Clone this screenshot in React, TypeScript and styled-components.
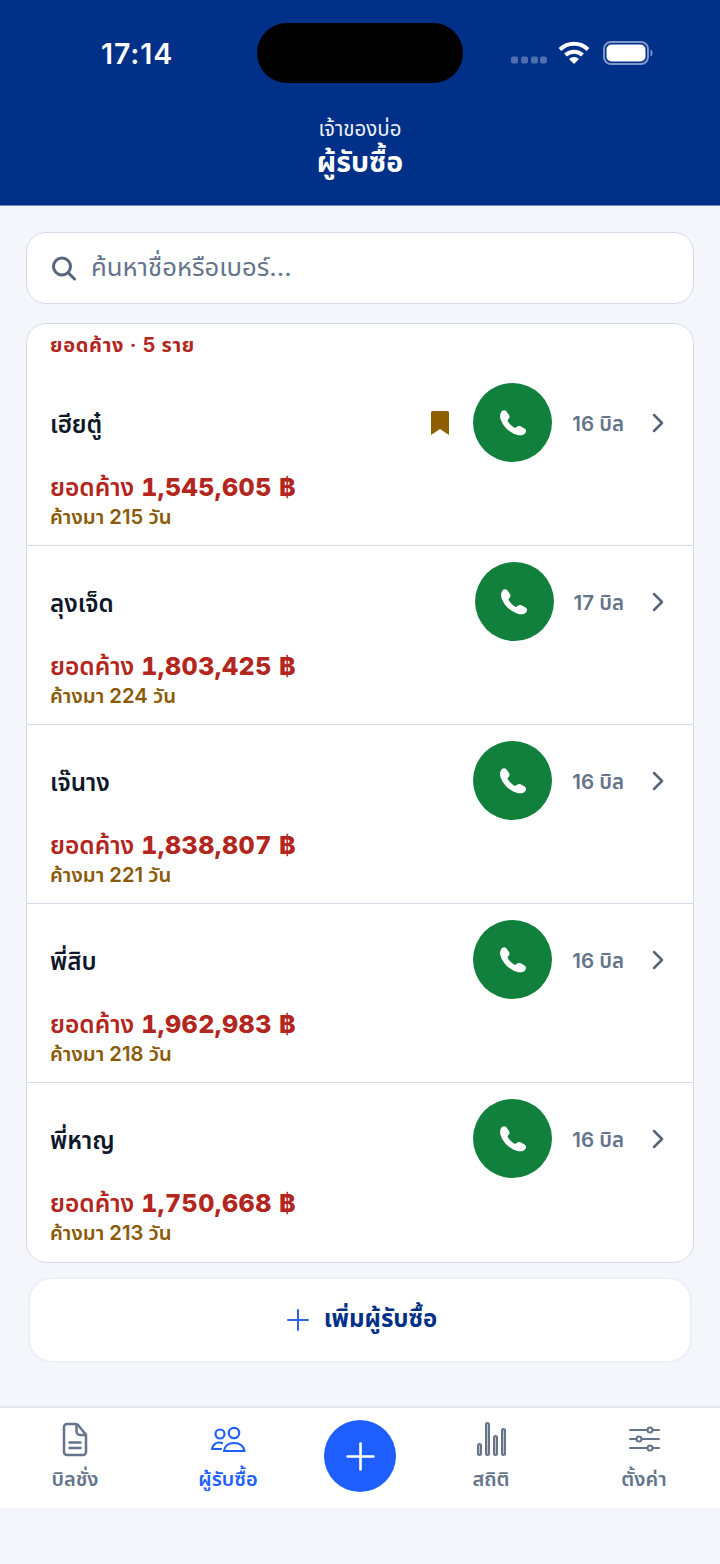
import React from "react";
import styled, { createGlobalStyle } from "styled-components";

const Global = createGlobalStyle`
  html, body { margin: 0; padding: 0; background: #f4f6fb; }
  body { font-family: Inter, "Noto Sans", "Noto Sans Thai", sans-serif; }
  * { box-sizing: border-box; }
`;

const Page = styled.div`
  width: 720px;
  height: 1564px;
  background: #f4f6fb;
  display: flex;
  flex-direction: column;
`;

const Header = styled.header`
  height: 206px;
  background: #003087;
  border-bottom: 1px solid #6f8cc6;
  color: #fff;
  display: flex;
  flex-direction: column;
`;

const StatusBar = styled.div`
  height: 60px;
  margin-top: 23px;
  display: flex;
  align-items: center;
`;

const Time = styled.div`
  width: 257px;
  padding-left: 101px;
  font-size: 28.5px;
  font-weight: 600;
  letter-spacing: 0.9px;
`;

const Island = styled.div`
  width: 206px;
  height: 60px;
  border-radius: 30px;
  background: #000;
`;

const StatusIcons = styled.div`
  margin-left: 48px;
  display: flex;
  align-items: center;
  gap: 11px;
  height: 60px;
  padding-bottom: 1px;
`;

const SignalDots = styled.svg`
  width: 36px;
  height: 8px;
  margin-top: 15px;
`;

const Battery = styled.svg`
  width: 50px;
  height: 24px;
  margin-left: 2px;
`;

const HeaderTitles = styled.div`
  margin-top: 33px;
  text-align: center;
`;

const Owner = styled.div`
  font-size: 20.5px;
  line-height: 26px;
  color: #eef2fb;
`;

const Title = styled.div`
  font-size: 28.5px;
  line-height: 36px;
  font-weight: 700;
  padding-top: 2px;
`;

const Content = styled.main`
  flex: 1;
  padding: 26px 26px 0;
  display: flex;
  flex-direction: column;
`;

const Search = styled.div`
  height: 72px;
  border-radius: 20px;
  background: #fff;
  border: 1px solid #d5dce9;
  display: flex;
  align-items: center;
  padding: 0 24px;
  gap: 15px;
  color: #64748b;
  font-size: 25.7px;
`;

const Card = styled.section`
  margin-top: 19px;
  height: 940px;
  border-radius: 20px;
  background: #fff;
  border: 1px solid #d5dce9;
  overflow: hidden;
`;

const CardLabel = styled.div`
  height: 43px;
  padding: 8px 23px 0;
  font-size: 20px;
  line-height: 26px;
  font-weight: 700;
  letter-spacing: 0.7px;
  color: #b3261e;
`;

const Row = styled.div`
  height: 179px;
  padding: 16px 28px 0 23px;
  border-bottom: 1px solid #d5dce9;
  &:last-child { border-bottom: 0; }
`;

const RowTop = styled.div`
  height: 80px;
  display: flex;
  align-items: center;
`;

const Name = styled.div`
  flex: 1;
  font-size: 24.2px;
  font-weight: 600;
  color: #0f172a;
  padding-top: 4px;
`;

const Flag = styled.svg`
  width: 20px;
  height: 26px;
  margin-right: 23px;
  margin-bottom: 1px;
`;

const Call = styled.div`
  width: 79px;
  height: 79px;
  margin-bottom: 1px;
  border-radius: 50%;
  background: #11803c;
  display: flex;
  align-items: center;
  justify-content: center;
`;

const Bills = styled.div`
  margin-left: 20px;
  padding-top: 3px;
  font-size: 20.5px;
  font-weight: 600;
  color: #64748b;
  white-space: nowrap;
`;

const Chevron = styled.svg`
  width: 14px;
  height: 22px;
  margin-left: 27px;
`;

const Amount = styled.div`
  margin-top: 8px;
  display: flex;
  align-items: baseline;
  gap: 7px;
  color: #b3261e;
  font-size: 24.5px;
  line-height: 32px;
  font-weight: 600;
`;

const Figure = styled.span`
  font-size: 25px;
  font-weight: 800;
  letter-spacing: 0.45px;
  font-variant-numeric: tabular-nums;
`;

const Overdue = styled.div`
  margin-top: 1px;
  font-size: 20.3px;
  line-height: 26px;
  font-weight: 600;
  color: #8a5a06;
`;

const AddButton = styled.div`
  margin: 14px 2px 0;
  height: 86px;
  border-radius: 24px;
  background: #fff;
  border: 2px solid #eaeff8;
  display: flex;
  align-items: center;
  justify-content: center;
  gap: 14px;
  padding-left: 3px;
  color: #003087;
  font-size: 24px;
  font-weight: 700;
`;

const Nav = styled.nav`
  height: 102px;
  background: #fff;
  border-top: 2px solid #e2e7f1;
  margin-bottom: 56px;
  display: grid;
  grid-template-columns: 150px 156px 108px 154px 152px;
`;

const NavItem = styled.div<{ $active?: boolean }>`
  display: flex;
  flex-direction: column;
  align-items: center;
  color: ${(p) => (p.$active ? "#1f5fff" : "#64748b")};
  font-size: 20px;
  font-weight: 600;
  padding-top: 13px;
`;

const NavIcon = styled.svg`
  width: 38px;
  height: 38px;
`;

const NavLabel = styled.div`
  line-height: 28px;
  margin-top: 6px;
`;

const FabCell = styled.div`
  display: flex;
  justify-content: center;
  padding-top: 12px;
`;

const Fab = styled.div`
  width: 72px;
  height: 72px;
  border-radius: 50%;
  background: #1f5fff;
  display: flex;
  align-items: center;
  justify-content: center;
`;

const rows = [
  { name: "เฮียตู๋", amount: "1,545,605", days: "215", bills: "16", flag: true },
  { name: "ลุงเจ็ด", amount: "1,803,425", days: "224", bills: "17" },
  { name: "เจ๊นาง", amount: "1,838,807", days: "221", bills: "16" },
  { name: "พี่สิบ", amount: "1,962,983", days: "218", bills: "16" },
  { name: "พี่หาญ", amount: "1,750,668", days: "213", bills: "16" },
];

const Plus = ({ size, color, w }: { size: number; color: string; w: number }) => (
  <svg width={size} height={size} viewBox="0 0 24 24" fill="none" stroke={color} strokeWidth={w} strokeLinecap="round">
    <path d="M12 2v20M2 12h20" />
  </svg>
);

export default function App() {
  return (
    <Page>
      <Global />
      <Header>
        <StatusBar>
          <Time>17:14</Time>
          <Island />
          <StatusIcons>
            <SignalDots viewBox="0 0 36 8" fill="#4f6fae">
              <rect x="0" y="0.5" width="7" height="7" rx="2" />
              <rect x="10" y="0.5" width="7" height="7" rx="2" />
              <rect x="20" y="0.5" width="7" height="7" rx="2" />
              <rect x="29" y="0.5" width="7" height="7" rx="2" />
            </SignalDots>
            <svg width="32" height="24" viewBox="0 0 32 24" fill="none" stroke="#fff" strokeWidth="4">
              <path d="M2 8.500a20 20 0 0 1 28 0" />
              <path d="M7.500 14a12.500 12.500 0 0 1 17 0" />
              <path d="M16 23l-5-5a7 7 0 0 1 10 0z" fill="#fff" stroke="none" />
            </svg>
            <Battery viewBox="0 0 50 24" fill="none">
              <rect x="1" y="1" width="44" height="22" rx="7" stroke="#7f97c9" strokeWidth="2" />
              <rect x="3.500" y="3.500" width="39" height="17" rx="5" fill="#fff" />
              <path d="M47.500 8.500c1.500.5 2 2 2 3.500s-.5 3-2 3.500z" fill="#7f97c9" />
            </Battery>
          </StatusIcons>
        </StatusBar>
        <HeaderTitles>
          <Owner>เจ้าของบ่อ</Owner>
          <Title>ผู้รับซื้อ</Title>
        </HeaderTitles>
      </Header>
      <Content>
        <Search>
          <svg width="25" height="26" viewBox="0 0 25 26" fill="none" stroke="#56657c" strokeWidth="3" strokeLinecap="round">
            <circle cx="11" cy="11.500" r="8.500" />
            <path d="M17.500 18l6 6" />
          </svg>
          ค้นหาชื่อหรือเบอร์...
        </Search>
        <Card>
          <CardLabel>ยอดค้าง · 5 ราย</CardLabel>
          {rows.map((r) => (
            <Row key={r.name}>
              <RowTop>
                <Name>{r.name}</Name>
                {r.flag && (
                  <Flag viewBox="0 0 20 26">
                    <path d="M2.500 1h15a1.500 1.500 0 0 1 1.500 1.500V25l-9-6-9 6V2.500A1.500 1.500 0 0 1 2.500 1z" fill="#8f5e00" />
                  </Flag>
                )}
                <Call>
                  <svg width="46" height="46" viewBox="0 0 46 46" fill="#fff">
                    <path d="M11 12.500C12 10 15 9.500 16.500 11.500L19 15C20 16.800 19.500 18 18 19.500L17.500 20.500C19 24 22 26.500 25 28L26.500 27C28 25.800 29.500 25.800 31 26.500L34.500 28.500C36.500 29.800 36.500 32 35 33.500C33 35.500 30 36 26 34.500C18 31.500 13 26 10.500 19C9.800 16.500 10 14 11 12.500Z" />
                  </svg>
                </Call>
                <Bills>{r.bills} บิล</Bills>
                <Chevron viewBox="0 0 14 22" fill="none" stroke="#56657c" strokeWidth="2.500" strokeLinecap="round" strokeLinejoin="round">
                  <path d="M3 3l8 8-8 8" />
                </Chevron>
              </RowTop>
              <Amount>
                ยอดค้าง <Figure>{r.amount} ฿</Figure>
              </Amount>
              <Overdue>ค้างมา {r.days} วัน</Overdue>
            </Row>
          ))}
        </Card>
        <AddButton>
          <Plus size={24} color="#2f63e0" w={2} />
          เพิ่มผู้รับซื้อ
        </AddButton>
      </Content>
      <Nav>
        <NavItem>
          <NavIcon viewBox="0 0 38 38" fill="none" stroke="currentColor" strokeWidth="2.500" strokeLinecap="round" strokeLinejoin="round">
            <path d="M11 3h8.500c1 0 2 .5 2.700 1.200l6.600 8c.7.7 1.200 1.700 1.200 2.800v16a3 3 0 0 1-3 3H11a3 3 0 0 1-3-3V6a3 3 0 0 1 3-3z" />
            <path d="M20.500 3.500v7a3.500 3.500 0 0 0 3.500 3.500h6M13.500 21.500h11M13.500 27h11" />
          </NavIcon>
          <NavLabel>บิลชั่ง</NavLabel>
        </NavItem>
        <NavItem $active>
          <NavIcon viewBox="0 0 38 38" fill="none" stroke="currentColor" strokeWidth="2.200" strokeLinecap="round" strokeLinejoin="round">
            <circle cx="11" cy="13" r="4.500" />
            <circle cx="25" cy="12" r="5.200" />
            <path d="M13 22c-1-.5-2-.5-3-.5-3.500 0-6 2.500-7 6.500h9" />
            <path d="M15 30c.5-5 4.500-8 10-8s9.500 3 10.500 8z" />
          </NavIcon>
          <NavLabel>ผู้รับซื้อ</NavLabel>
        </NavItem>
        <FabCell>
          <Fab>
            <Plus size={31} color="#fff" w={2} />
          </Fab>
        </FabCell>
        <NavItem>
          <NavIcon viewBox="0 0 38 38" fill="none" stroke="currentColor" strokeWidth="2.200" strokeLinejoin="round">
            <rect x="6.100" y="23" width="2.800" height="11" rx="1.400" />
            <rect x="14.100" y="2" width="2.800" height="32" rx="1.400" />
            <rect x="22.100" y="15" width="2.800" height="19" rx="1.400" />
            <rect x="30.100" y="8" width="2.800" height="26" rx="1.400" />
          </NavIcon>
          <NavLabel>สถิติ</NavLabel>
        </NavItem>
        <NavItem>
          <NavIcon viewBox="0 0 38 38" fill="none" stroke="currentColor" strokeWidth="2" strokeLinecap="round">
            <path d="M5 9h17.500M27.500 9h6.500M5 18h6.500M16.500 18h17.500M5 27h17.500M27.500 27h6.500" />
            <circle cx="25" cy="9" r="2.500" />
            <circle cx="14" cy="18" r="2.500" />
            <circle cx="25" cy="27" r="2.500" />
          </NavIcon>
          <NavLabel>ตั้งค่า</NavLabel>
        </NavItem>
      </Nav>
    </Page>
  );
}
